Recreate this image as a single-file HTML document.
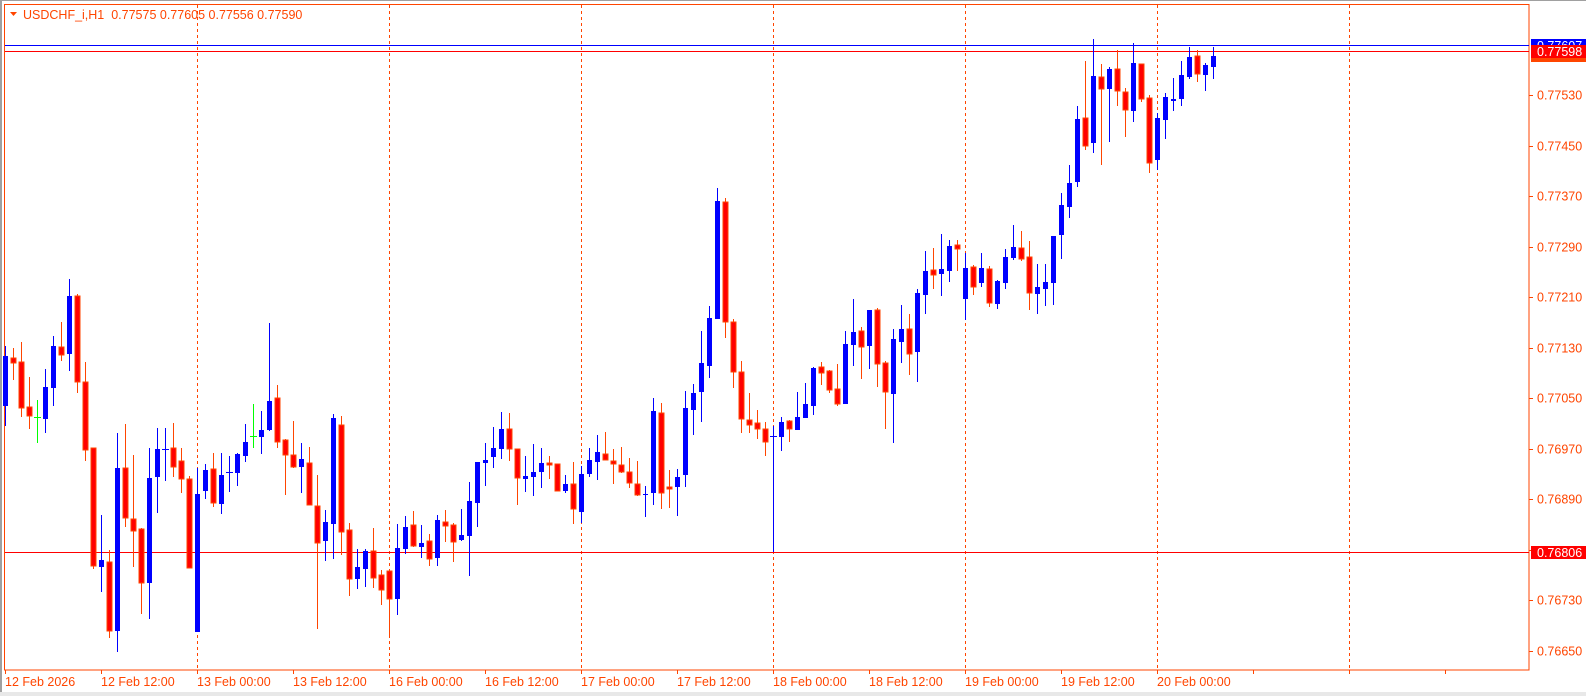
<!DOCTYPE html>
<html><head><meta charset="utf-8"><style>
html,body{margin:0;padding:0;background:#fff;width:1586px;height:696px;overflow:hidden}
svg{display:block}
text{font-family:"Liberation Sans","DejaVu Sans",sans-serif;font-size:12.5px}
</style></head><body>
<svg id="s" width="1586" height="696" xmlns="http://www.w3.org/2000/svg">
<rect x="0" y="0" width="1586" height="696" fill="#fff"/>
<rect x="0" y="0" width="2" height="693" fill="#a0a0a0"/>
<rect x="0" y="0" width="1586" height="1" fill="#a0a0a0"/>
<rect x="0" y="692" width="1586" height="4" fill="#e8e8e8"/>
<rect x="4.5" y="4.5" width="1524.5" height="665.5" fill="none" stroke="#ff4500" stroke-width="1"/>
<g stroke="#ff4500" stroke-width="1" stroke-dasharray="3,3">
<line x1="197.5" y1="5" x2="197.5" y2="669"/><line x1="389.5" y1="5" x2="389.5" y2="669"/>
<line x1="581.5" y1="5" x2="581.5" y2="669"/><line x1="773.5" y1="5" x2="773.5" y2="669"/>
<line x1="965.5" y1="5" x2="965.5" y2="669"/><line x1="1157.5" y1="5" x2="1157.5" y2="669"/>
<line x1="1349.5" y1="5" x2="1349.5" y2="669"/>
</g>
<line x1="5" y1="45.5" x2="1529" y2="45.5" stroke="#0000ff" stroke-width="1"/>
<line x1="5" y1="51.5" x2="1529" y2="51.5" stroke="#ff0000" stroke-width="1"/>
<line x1="5" y1="552.5" x2="1529" y2="552.5" stroke="#ff0000" stroke-width="1"/>
<g id="c"></g>
<polygon points="10,12 17,12 13.5,16" fill="#ff4500"/>
<text x="23" y="19" fill="#ff4500">USDCHF_i,H1&#160;&#160;0.77575 0.77605 0.77556 0.77590</text>
<g fill="#ff4500" id="ax"></g>
<rect x="1531" y="57" width="55" height="5" fill="#ff4500"/>
<rect x="1531" y="39" width="55" height="12" fill="#0000ff"/>
<text x="1537" y="50" fill="#fff">0.77607</text>
<rect x="1531" y="45" width="55" height="13" fill="#ff0000"/>
<text x="1537" y="56" fill="#fff">0.77598</text>
<rect x="1531" y="546" width="55" height="13" fill="#ff0000"/>
<text x="1537" y="557" fill="#fff">0.76806</text>
</svg>
<script>
var D=[[346,426,356,406,'b'],[348,380,358,363,'r'],[342,417,362,408,'r'],[377,429,407,416,'r'],[400,443,417,417,'g'],[369,433,387,419,'b'],[336,406,346,388,'b'],[322,361,347,355,'r'],[279,371,296,354,'b'],[294,393,296,382,'r'],
[362,461,382,450,'r'],[448,569,448,566,'r'],[515,592,560,567,'b'],[550,638,562,631,'r'],[433,652,468,631,'b'],[424,527,468,518,'r'],[455,567,519,531,'r'],[528,614,529,583,'r'],[448,619,478,583,'b'],[428,513,449,477,'b'],
[428,481,449,449,'b'],[423,477,448,467,'r'],[448,493,461,479,'r'],[476,568,479,568,'r'],[468,632,494,632,'b'],[464,499,470,491,'b'],[453,507,469,503,'r'],[453,514,475,504,'b'],[456,492,472,472,'b'],[453,486,454,473,'b'],
[424,462,442,456,'b'],[404,448,436,436,'g'],[411,454,430,437,'b'],[323,431,401,430,'b'],[385,448,398,442,'r'],[439,495,440,455,'r'],[421,468,455,467,'r'],[443,493,459,467,'b'],[447,505,463,505,'r'],[475,629,506,543,'r'],
[510,561,522,541,'b'],[414,559,418,524,'b'],[416,555,425,532,'r'],[523,596,530,579,'r'],[549,589,567,579,'b'],[549,587,551,569,'b'],[528,588,551,578,'r'],[570,605,575,590,'r'],[570,638,571,599,'r'],[524,615,548,599,'b'],
[516,554,527,549,'b'],[511,547,525,546,'r'],[525,558,543,547,'b'],[534,566,541,559,'r'],[515,566,520,558,'b'],[510,542,522,526,'r'],[523,562,525,542,'r'],[509,541,535,540,'b'],[482,576,501,536,'b'],[462,527,462,503,'b'],
[443,486,460,463,'b'],[427,468,448,457,'b'],[412,459,429,449,'b'],[413,461,429,449,'r'],[449,505,449,478,'r'],[456,492,476,479,'b'],[444,496,472,477,'b'],[448,488,463,472,'b'],[456,479,463,465,'r'],[464,491,464,491,'r'],
[475,493,484,491,'b'],[462,524,484,509,'r'],[466,523,474,512,'b'],[448,477,460,474,'b'],[435,480,452,462,'b'],[432,460,454,460,'r'],[449,484,461,464,'r'],[447,473,465,472,'r'],[458,488,472,483,'r'],[461,496,484,495,'r'],
[486,517,494,495,'b'],[398,505,411,493,'b'],[403,509,413,493,'r'],[470,508,487,489,'r'],[469,516,477,487,'b'],[391,487,408,475,'b'],[384,435,393,410,'b'],[331,422,363,392,'b'],[306,378,318,366,'b'],[188,319,201,319,'b'],
[198,338,202,322,'r'],[319,388,322,372,'r'],[361,433,372,419,'r'],[393,433,420,425,'r'],[410,439,423,429,'r'],[422,456,429,442,'r'],[426,552,436,436,'b'],[417,451,422,437,'b'],[420,442,421,429,'r'],[392,430,417,430,'b'],
[383,418,404,418,'b'],[367,415,368,406,'b'],[362,385,367,373,'r'],[370,393,371,390,'r'],[364,406,389,404,'r'],[331,404,344,404,'b'],[299,366,332,345,'b'],[327,379,331,347,'r'],[310,369,310,346,'b'],[308,387,310,364,'r'],
[361,429,363,392,'r'],[329,443,339,394,'b'],[305,363,329,342,'b'],[314,375,329,354,'r'],[289,382,293,352,'b'],[251,314,271,295,'b'],[248,289,270,275,'r'],[234,296,269,274,'b'],[240,282,246,271,'b'],[240,271,245,249,'r'],
[253,320,268,299,'b'],[265,295,267,287,'r'],[253,287,268,283,'b'],[266,307,269,303,'r'],[280,309,281,304,'b'],[249,289,257,283,'b'],[225,260,247,258,'b'],[231,261,248,259,'r'],[241,310,257,293,'r'],[264,314,287,294,'b'],
[264,306,282,289,'b'],[236,305,236,283,'b'],[193,259,205,235,'b'],[165,218,183,207,'b'],[106,187,119,182,'b'],[61,150,118,146,'r'],[39,153,76,143,'b'],[64,165,77,89,'r'],[67,142,69,89,'b'],[50,106,69,91,'r'],
[88,137,92,110,'r'],[43,122,63,111,'b'],[64,102,64,99,'r'],[95,173,98,163,'r'],[113,170,118,160,'b'],[93,139,97,120,'b'],[78,111,99,101,'b'],[61,106,75,99,'b'],[47,79,57,77,'b'],[50,82,56,74,'r'],
[63,91,65,75,'b'],[47,79,56,67,'b']];
var g=document.getElementById('c'),h='';
for(var i=0;i<D.length;i++){var d=D[i],x=Math.round(5+8*i),c=d[4];
var wc=c=='b'?'#0000ff':(c=='g'?'#00ff00':'#ff4500');
h+='<rect x="'+x+'" y="'+d[0]+'" width="1" height="'+(d[1]-d[0])+'" fill="'+wc+'"/>';
var bh=d[3]-d[2];
if(bh<1){h+='<rect x="'+(x-3)+'" y="'+d[2]+'" width="7" height="1" fill="'+wc+'"/>';}
else if(c=='r'){h+='<rect x="'+(x-2)+'" y="'+d[2]+'" width="5" height="'+bh+'" fill="#ff0000" stroke="#ff4500" stroke-width="1"/>';}
else{h+='<rect x="'+(x-2)+'" y="'+d[2]+'" width="5" height="'+bh+'" fill="'+wc+'"/>';}
}
g.innerHTML=h;
var ax=document.getElementById('ax'),a='';
var P=['0.77530','0.77450','0.77370','0.77290','0.77210','0.77130','0.77050','0.76970','0.76890','0.76810','0.76730','0.76650'];
for(var j=0;j<P.length;j++){var y=95+50.5*j;
a+='<rect x="1529" y="'+Math.round(y)+'" width="4" height="1"/>';
if(j!=9)a+='<text x="1537" y="'+(Math.round(y)+4.5)+'">'+P[j]+'</text>';}
var T=['12 Feb 2026','12 Feb 12:00','13 Feb 00:00','13 Feb 12:00','16 Feb 00:00','16 Feb 12:00','17 Feb 00:00','17 Feb 12:00','18 Feb 00:00','18 Feb 12:00','19 Feb 00:00','19 Feb 12:00','20 Feb 00:00'];
for(var k=0;k<T.length;k++){var tx=5+96*k;
a+='<rect x="'+tx+'" y="670" width="1" height="4"/>';
a+='<text x="'+tx+'" y="686">'+T[k]+'</text>';}
a+='<rect x="1253" y="670" width="1" height="4"/><rect x="1349" y="670" width="1" height="4"/><rect x="1445" y="670" width="1" height="4"/>';
ax.innerHTML=a;
</script>
</body></html>
